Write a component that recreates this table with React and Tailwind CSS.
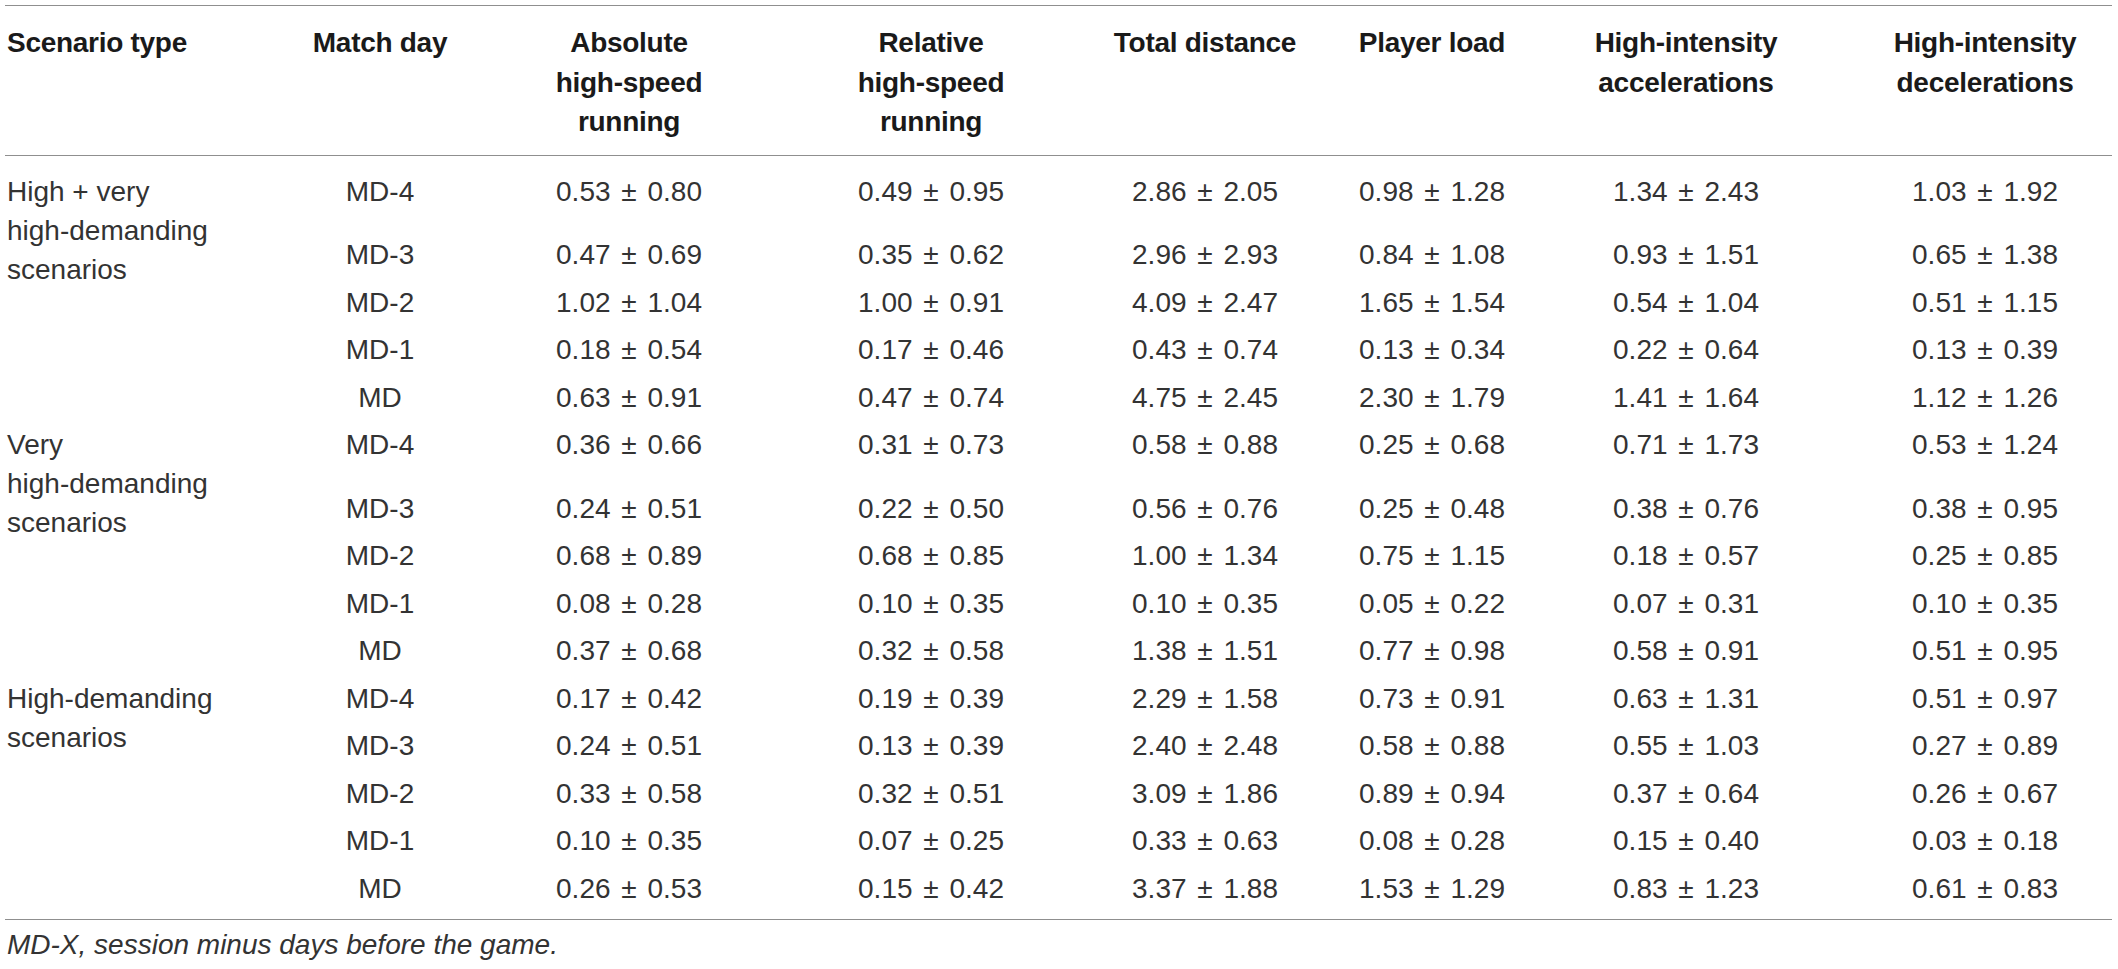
const groups = [
  {
    label: ['High + very', 'high-demanding', 'scenarios'],
    rows: [
      ['MD-4', '0.53 ± 0.80', '0.49 ± 0.95', '2.86 ± 2.05', '0.98 ± 1.28', '1.34 ± 2.43', '1.03 ± 1.92'],
      ['MD-3', '0.47 ± 0.69', '0.35 ± 0.62', '2.96 ± 2.93', '0.84 ± 1.08', '0.93 ± 1.51', '0.65 ± 1.38'],
      ['MD-2', '1.02 ± 1.04', '1.00 ± 0.91', '4.09 ± 2.47', '1.65 ± 1.54', '0.54 ± 1.04', '0.51 ± 1.15'],
      ['MD-1', '0.18 ± 0.54', '0.17 ± 0.46', '0.43 ± 0.74', '0.13 ± 0.34', '0.22 ± 0.64', '0.13 ± 0.39'],
      ['MD', '0.63 ± 0.91', '0.47 ± 0.74', '4.75 ± 2.45', '2.30 ± 1.79', '1.41 ± 1.64', '1.12 ± 1.26'],
    ],
  },
  {
    label: ['Very', 'high-demanding', 'scenarios'],
    rows: [
      ['MD-4', '0.36 ± 0.66', '0.31 ± 0.73', '0.58 ± 0.88', '0.25 ± 0.68', '0.71 ± 1.73', '0.53 ± 1.24'],
      ['MD-3', '0.24 ± 0.51', '0.22 ± 0.50', '0.56 ± 0.76', '0.25 ± 0.48', '0.38 ± 0.76', '0.38 ± 0.95'],
      ['MD-2', '0.68 ± 0.89', '0.68 ± 0.85', '1.00 ± 1.34', '0.75 ± 1.15', '0.18 ± 0.57', '0.25 ± 0.85'],
      ['MD-1', '0.08 ± 0.28', '0.10 ± 0.35', '0.10 ± 0.35', '0.05 ± 0.22', '0.07 ± 0.31', '0.10 ± 0.35'],
      ['MD', '0.37 ± 0.68', '0.32 ± 0.58', '1.38 ± 1.51', '0.77 ± 0.98', '0.58 ± 0.91', '0.51 ± 0.95'],
    ],
  },
  {
    label: ['High-demanding', 'scenarios'],
    rows: [
      ['MD-4', '0.17 ± 0.42', '0.19 ± 0.39', '2.29 ± 1.58', '0.73 ± 0.91', '0.63 ± 1.31', '0.51 ± 0.97'],
      ['MD-3', '0.24 ± 0.51', '0.13 ± 0.39', '2.40 ± 2.48', '0.58 ± 0.88', '0.55 ± 1.03', '0.27 ± 0.89'],
      ['MD-2', '0.33 ± 0.58', '0.32 ± 0.51', '3.09 ± 1.86', '0.89 ± 0.94', '0.37 ± 0.64', '0.26 ± 0.67'],
      ['MD-1', '0.10 ± 0.35', '0.07 ± 0.25', '0.33 ± 0.63', '0.08 ± 0.28', '0.15 ± 0.40', '0.03 ± 0.18'],
      ['MD', '0.26 ± 0.53', '0.15 ± 0.42', '3.37 ± 1.88', '1.53 ± 1.29', '0.83 ± 1.23', '0.61 ± 0.83'],
    ],
  },
];

const headers = [
  ['Scenario type'],
  ['Match day'],
  ['Absolute', 'high-speed', 'running'],
  ['Relative', 'high-speed', 'running'],
  ['Total distance'],
  ['Player load'],
  ['High-intensity', 'accelerations'],
  ['High-intensity', 'decelerations'],
];

const widths = ['w-[299px]', 'w-[152px]', 'w-[346px]', 'w-[258px]', 'w-[290px]', 'w-[164px]', 'w-[344px]', 'w-[254px]'];

const Lines = ({ lines }) =>
  lines.map((line, i) => (
    <span key={i} className="block whitespace-nowrap">
      {line}
    </span>
  ));

// "0.53 ± 0.80" -> mean, sign, sd, with a little more room round the sign
const Value = ({ text }) => {
  const [mean, sd] = text.split(' ± ');
  return (
    <>
      {`${mean} `}
      <span className="mx-[3px]">±</span>
      {` ${sd}`}
    </>
  );
};

export default function App() {
  return (
    <div className="w-[2118px] h-[969px] bg-white pt-[5px] pl-[5px] pr-[6px] font-['Liberation_Sans',Arial,sans-serif] text-[28px] text-[#333333]">
      <table className="w-[2107px] table-fixed border-collapse border-t border-b border-[#8f8f8f]">
        <colgroup>
          {widths.map((w) => (
            <col key={w} className={w} />
          ))}
        </colgroup>
        <thead>
          <tr className="border-b border-[#8f8f8f]">
            {headers.map((h, i) => (
              <th
                key={i}
                className={
                  i === 0
                    ? 'align-top text-left pl-[2px] pt-[17px] pb-[13px] leading-[39.5px] font-bold text-[#1a1a1a] tracking-[-0.01em]'
                    : 'align-top text-center p-0 pt-[17px] pb-[13px] leading-[39.5px] font-bold text-[#1a1a1a] tracking-[-0.01em]'
                }
              >
                <Lines lines={h} />
              </th>
            ))}
          </tr>
        </thead>
        <tbody>
          <tr className="h-[10.5px]">
            <td colSpan={8} className="p-0" />
          </tr>
          {groups.map((g, gi) =>
            g.rows.map((r, ri) => (
              <tr key={`${gi}-${ri}`} className={ri === 0 && gi < 2 ? 'h-[63.5px]' : 'h-[47.5px]'}>
                {ri === 0 && (
                  <td rowSpan={5} className="align-top text-left pl-[2px] pt-[6px] leading-[39px]">
                    <Lines lines={g.label} />
                  </td>
                )}
                {r.map((v, vi) => (
                  <td key={vi} className="align-top text-center p-0 pt-[6px] leading-[39px] whitespace-nowrap">
                    {vi === 0 ? v : <Value text={v} />}
                  </td>
                ))}
              </tr>
            ))
          )}
          <tr className="h-[9px]">
            <td colSpan={8} className="p-0" />
          </tr>
        </tbody>
      </table>
      <p className="pt-[5px] pl-[2px] leading-[39px] italic text-[#333333]">
        MD-X, session minus days before the game.
      </p>
    </div>
  );
}
